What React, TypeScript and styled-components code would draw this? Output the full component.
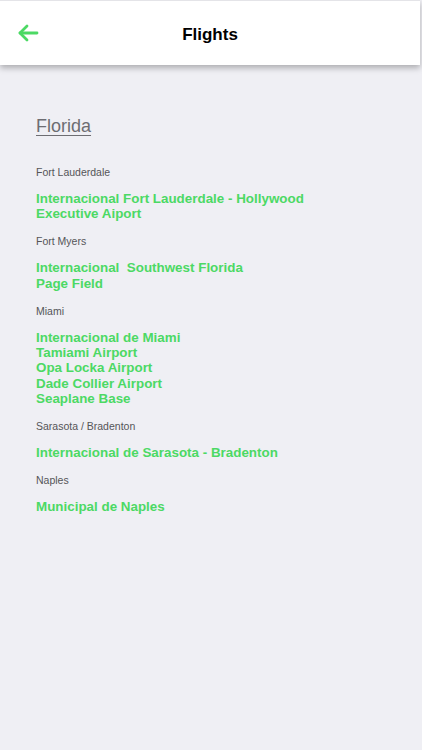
import React from "react";
import styled, { createGlobalStyle } from "styled-components";

const Global = createGlobalStyle`
  html, body { margin: 0; padding: 0; background: #efeff4; }
  body { font-family: "Liberation Sans", Arial, Helvetica, sans-serif; -webkit-font-smoothing: antialiased; }
`;

const Page = styled.div`
  min-height: 750px;
  background: #efeff4;
`;

const Header = styled.header`
  height: 64px;
  margin-right: 2px;
  background: #ffffff;
  border-top: 1px solid #e4e4e8;
  box-shadow: 0 3px 6px rgba(0, 0, 0, 0.28);
  display: grid;
  grid-template-columns: 60px 1fr 60px;
  align-items: center;
  position: relative;
  z-index: 1;
`;

const BackButton = styled.button`
  border: none;
  background: none;
  padding: 0 0 0 16px;
  height: 100%;
  display: flex;
  align-items: center;
  cursor: pointer;
`;

const Title = styled.h1`
  margin: 0;
  text-align: center;
  font-size: 17px;
  font-weight: 700;
  color: #000;
  padding-top: 3px;
`;

const Content = styled.main`
  padding: 51px 36px 0 36px;
`;

const State = styled.h2`
  margin: 0 0 28px 0;
  font-size: 18px;
  line-height: 21px;
  font-weight: 400;
  color: #6d6d72;
  text-decoration: underline;
  text-decoration-thickness: 1px;
  text-underline-offset: 3px;
`;

const Section = styled.section`
  margin-bottom: 12.5px;
`;

const City = styled.div`
  font-size: 10.5px;
  line-height: 14px;
  color: #555558;
  margin-bottom: 12px;
`;

const Airport = styled.a`
  display: block;
  font-size: 13.4px;
  line-height: 15.4px;
  font-weight: 700;
  color: #4cd964;
  text-decoration: none;
  white-space: pre;
`;

const data: { city: string; airports: string[] }[] = [
  {
    city: "Fort Lauderdale",
    airports: ["Internacional Fort Lauderdale - Hollywood", "Executive Aiport"],
  },
  {
    city: "Fort Myers",
    airports: ["Internacional  Southwest Florida", "Page Field"],
  },
  {
    city: "Miami",
    airports: [
      "Internacional de Miami",
      "Tamiami Airport",
      "Opa Locka Airport",
      "Dade Collier Airport",
      "Seaplane Base",
    ],
  },
  { city: "Sarasota / Bradenton", airports: ["Internacional de Sarasota - Bradenton"] },
  { city: "Naples", airports: ["Municipal de Naples"] },
];

export default function App() {
  return (
    <Page>
      <Global />
      <Header>
        <BackButton aria-label="Back">
          <svg width="24" height="24" viewBox="0 0 24 24" fill="none" stroke="#4cd964" strokeWidth="2.8" strokeLinecap="round" strokeLinejoin="round">
            <path d="M21 12H4" />
            <path d="M11 5l-7 7 7 7" />
          </svg>
        </BackButton>
        <Title>Flights</Title>
        <div />
      </Header>
      <Content>
        <State>Florida</State>
        {data.map((s) => (
          <Section key={s.city}>
            <City>{s.city}</City>
            {s.airports.map((a) => (
              <Airport key={a}>{a}</Airport>
            ))}
          </Section>
        ))}
      </Content>
    </Page>
  );
}
